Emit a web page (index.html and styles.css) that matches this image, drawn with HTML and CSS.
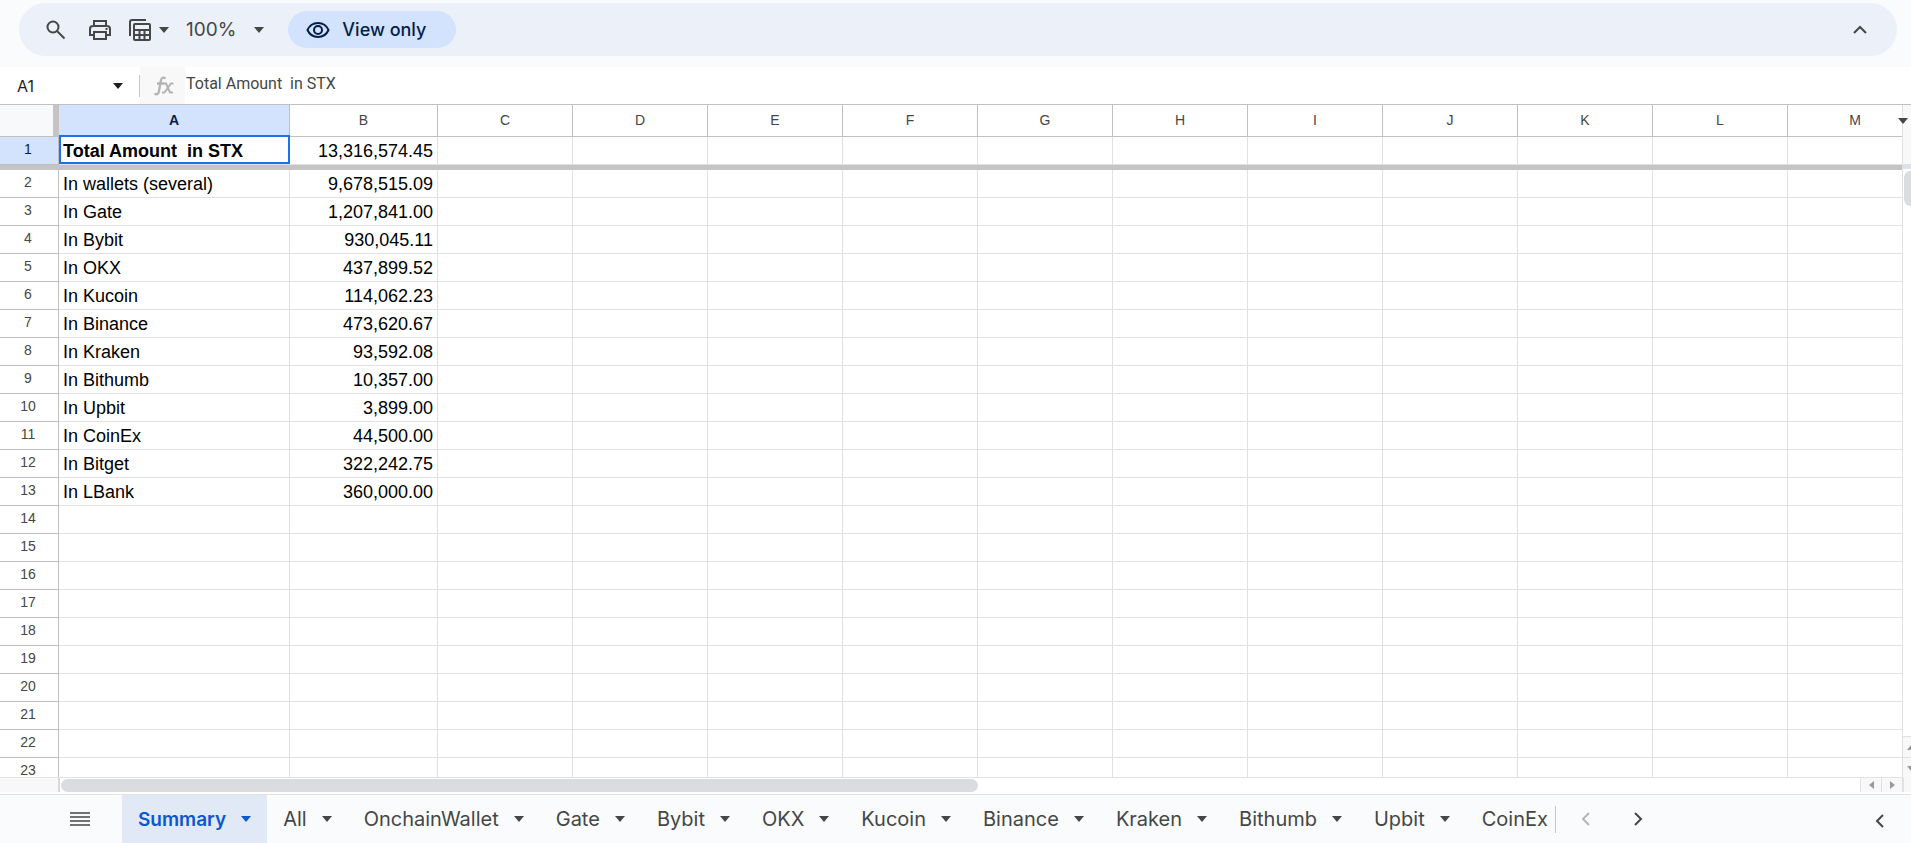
FILE: index.html
```html
<!DOCTYPE html>
<html lang="en">
<head>
    <meta charset="UTF-8">
    <meta name="viewport" content="width=device-width, initial-scale=1.0">
    <title>Total Amount in STX</title>
    <link rel="stylesheet" href="styles.css">
</head>
<body>
    <div class="toolbar">
        <button class="tool" aria-label="Search">
            <svg width="20" height="20" viewBox="0 0 20 20" fill="none" stroke="currentColor" stroke-width="2"><circle cx="7" cy="7" r="5.5"/><path d="M11 11l7.5 7.5"/></svg>
        </button>
        <button class="tool" aria-label="Print">
            <svg width="22" height="20" viewBox="0 0 22 20" fill="none" stroke="currentColor" stroke-width="2"><path d="M5 6V1h12v5M5 15H1V9a3 3 0 0 1 3-3h14a3 3 0 0 1 3 3v6h-4"/><path d="M5 12h12v7H5z"/><path d="M16.500 9h2"/></svg>
        </button>
        <button class="tool filter" aria-label="Filter views">
            <svg width="22" height="22" viewBox="0 0 22 22" fill="none" stroke="currentColor" stroke-width="2"><path d="M1 17V3a2 2 0 0 1 2-2h14"/><rect x="5" y="5" width="16" height="16" rx="1"/><path d="M5 11h16M5 16h16M10.500 11v10M15.500 11v10"/></svg>
            <span class="caret"></span>
        </button>
        <button class="tool zoom">100% <span class="caret"></span></button>
        <button class="view-only">
            <svg width="24" height="18" viewBox="0 0 24 18" fill="none" stroke="currentColor" stroke-width="2"><path d="M1.500 9C3.500 4.500 7.300 2 12 2s8.500 2.500 10.500 7c-2 4.500-5.800 7-10.500 7S3.500 13.500 1.500 9z"/><circle cx="12" cy="9" r="4"/></svg>
            View only
        </button>
        <button class="tool collapse" aria-label="Hide the menus">
            <svg width="14" height="9" viewBox="0 0 14 9" fill="none" stroke="currentColor" stroke-width="2"><path d="M1 8l6-6 6 6"/></svg>
        </button>
    </div>

    <div class="formula-bar">
        <button class="name-box">A1 <span class="caret"></span></button>
        <label class="fx" for="formula" aria-label="Formula">
            <svg width="20" height="20" viewBox="0 0 20 20" fill="none" stroke="currentColor" stroke-width="2"><path d="M11.500 2.500C9 .5 7.300 2 6.800 5L5 15c-.5 3-2.200 4.200-4.500 2.500M3 7.500h7" stroke-width="2.300"/><path d="M9.500 7.500H12l4 9h3M19.500 7.500H17l-6.500 9H8"/></svg>
        </label>
        <input class="formula" id="formula" type="text" value="Total Amount  in STX" readonly>
    </div>

    <div class="sheet">
        <div class="grid-view">
            <table class="grid">
                <colgroup id="cols"></colgroup>
                <thead id="head"></thead>
                <tbody id="rows"></tbody>
            </table>
        </div>
        <div class="v-scroll">
            <div class="v-head"><span class="caret"></span></div>
            <div class="v-track"><div class="v-thumb"></div></div>
            <button class="v-btn" aria-label="Scroll up"><span class="arrow up"></span></button>
            <button class="v-btn" aria-label="Scroll down"><span class="arrow down"></span></button>
        </div>
        <div class="h-scroll">
            <div class="h-corner"></div>
            <div class="h-track"><div class="h-thumb"></div></div>
            <button class="h-btn" aria-label="Scroll left"><span class="arrow left"></span></button>
            <button class="h-btn" aria-label="Scroll right"><span class="arrow right"></span></button>
        </div>
        <div class="scroll-corner"></div>
    </div>

    <div class="tab-bar">
        <button class="all-sheets" aria-label="All sheets">
            <svg width="20" height="14" viewBox="0 0 20 14" fill="none" stroke="currentColor" stroke-width="1.700"><path d="M0 1h20M0 5h20M0 9h20M0 13h20"/></svg>
        </button>
        <div class="tabs" id="tabs"></div>
        <div class="divider"></div>
        <button class="step disabled" aria-label="Previous tabs">
            <svg width="9" height="14" viewBox="0 0 9 14" fill="none" stroke="currentColor" stroke-width="2"><path d="M8 1L2 7l6 6"/></svg>
        </button>
        <button class="step" aria-label="Next tabs">
            <svg width="9" height="14" viewBox="0 0 9 14" fill="none" stroke="currentColor" stroke-width="2"><path d="M1 1l6 6-6 6"/></svg>
        </button>
        <button class="step side-panel" aria-label="Show side panel">
            <svg width="9" height="14" viewBox="0 0 9 14" fill="none" stroke="currentColor" stroke-width="2"><path d="M8 1L2 7l6 6"/></svg>
        </button>
    </div>

    <script src="script.js"></script>
</body>
</html>
```

FILE: styles.css
```css
* {
    box-sizing: border-box;
}
body {
    margin: 0;
    height: 100vh;
    display: flex;
    flex-direction: column;
    overflow: hidden;
    background: #f9fbfd;
    color: #444746;
    font-family: Inter, sans-serif;
}
button {
    margin: 0;
    padding: 0;
    border: none;
    background: none;
    color: inherit;
    font: inherit;
    cursor: pointer;
}
svg {
    display: block;
}
.caret {
    flex: none;
    border: 5px solid transparent;
    border-top: 6px solid currentColor;
    border-bottom: none;
}

/* toolbar */
.toolbar {
    display: flex;
    align-items: center;
    flex: none;
    height: 53px;
    margin: 3px 14px 11px 19px;
    padding: 0 30px 0 27px;
    border-radius: 27px;
    background: #ecf1f9;
}
.tool {
    display: flex;
    align-items: center;
    margin-right: 23px;
}
.filter {
    gap: 8px;
    margin-right: 17px;
}
.filter svg {
    margin-left: -5px;
}
.zoom {
    gap: 18px;
    margin-right: 24px;
    font-size: 19px;
}
.view-only {
    display: flex;
    align-items: center;
    gap: 12px;
    height: 37px;
    padding: 0 30px 0 18px;
    border-radius: 19px;
    background: #d3e3fd;
    color: #041e49;
    font-size: 18px;
    font-weight: 500;
}
.collapse {
    margin: 0 0 0 auto;
}

/* formula bar */
.formula-bar {
    display: flex;
    align-items: center;
    flex: none;
    height: 37px;
    background: #fff;
}
.name-box {
    display: flex;
    align-items: center;
    justify-content: space-between;
    width: 140px;
    height: 22px;
    padding: 0 16px 0 17px;
    border-right: 1px solid #c7c7c7;
    font-size: 16px;
    color: #1f1f1f;
}
.fx {
    display: flex;
    align-items: center;
    justify-content: center;
    width: 45px;
    height: 37px;
    padding-left: 2px;
    background: #f8f8f8;
    color: #b4b4b4;
}
.formula {
    flex: 1;
    height: 30px;
    padding: 0 1px 4px;
    border: none;
    outline: none;
    font-family: Roboto, sans-serif;
    font-size: 16px;
    color: #444746;
}

/* grid */
.sheet {
    display: grid;
    grid-template-columns: minmax(0, 1fr) 9px;
    grid-template-rows: minmax(0, 1fr) 16px;
    flex: 1;
    min-height: 0;
    border-top: 1px solid #c0c0c0;
    border-bottom: 1px solid #e1e3e1;
    background: #fff;
}
.grid-view {
    overflow: hidden;
    border-bottom: 1px solid #e1e3e1;
}
.grid {
    width: max-content;
    table-layout: fixed;
    border-collapse: separate;
    border-spacing: 0;
}
.col-number {
    width: 59px;
}
.col-a {
    width: 231px;
}
.col-b {
    width: 148px;
}
.col {
    width: 135px;
}
.grid th {
    padding: 0 0 2px;
    border-right: 1px solid #c0c0c0;
    border-bottom: 1px solid #c0c0c0;
    font-family: "Liberation Sans", Arial, sans-serif;
    font-size: 14px;
    font-weight: 400;
    color: #444746;
}
.grid thead th {
    height: 32px;
}
.grid .corner {
    border-right: 6px solid #c4c4c4;
    background: #f8f9fa;
}
.grid tbody th {
    height: 28px;
    padding: 0 2px 3px 0;
}
.grid .selected-head {
    background: #d3e3fd;
    color: #041e49;
}
.grid thead .selected-head {
    font-weight: 700;
}
.grid td {
    height: 28px;
    padding: 0 4px;
    border-right: 1px solid #e1e1e1;
    border-bottom: 1px solid #e1e1e1;
    font-family: "Liberation Sans", Arial, sans-serif;
    font-size: 18px;
    line-height: 20px;
    white-space: pre;
    color: #000;
}
.grid .amount {
    text-align: right;
}
.grid .selected {
    position: relative;
    font-weight: 700;
}
.selected::after {
    content: "";
    position: absolute;
    inset: -2px -1px 0 0;
    border: 2px solid #1a73e8;
}
.grid .freeze {
    height: 5px;
    padding: 0;
    border: none;
    background: #c4c4c4;
    line-height: 0;
}

/* scrollbars */
.arrow {
    display: block;
    border: 4px solid transparent;
}
.up {
    border-top: none;
    border-bottom: 5px solid #999;
}
.down {
    border-bottom: none;
    border-top: 5px solid #999;
}
.left {
    border-left: none;
    border-right: 5px solid #999;
}
.right {
    border-right: none;
    border-left: 5px solid #999;
}
.v-scroll {
    display: flex;
    flex-direction: column;
    border-left: 1px solid #e1e1e1;
}
.v-head {
    display: flex;
    align-items: center;
    flex: none;
    height: 64px;
    padding-bottom: 27px;
    border-bottom: 5px solid #dde1eb;
    background: #f8f8f8;
}
.v-head .caret {
    margin-left: -5px;
}
.v-track {
    flex: 1;
    padding: 2px 0 0 1px;
}
.v-thumb {
    width: 13px;
    height: 35px;
    border-radius: 7px;
    background: #dadce0;
}
.v-btn {
    display: flex;
    align-items: center;
    flex: none;
    height: 21px;
    padding-left: 4px;
    border-top: 1px solid #e1e1e1;
    background: #f8f8f8;
}
.h-scroll {
    display: flex;
    padding-bottom: 2px;
}
.h-corner {
    width: 60px;
    border-right: 2px solid #d9d9d9;
    background: #f8f8f8;
}
.h-track {
    flex: 1;
    padding: 1px;
}
.h-thumb {
    width: 51%;
    height: 13px;
    border-radius: 7px;
    background: #dadce0;
}
.h-btn {
    display: flex;
    align-items: center;
    justify-content: center;
    width: 21px;
    border-left: 1px solid #e1e1e1;
    background: #f8f8f8;
}
.scroll-corner {
    margin-bottom: 2px;
    border-left: 2px solid #e1e1e1;
    background: #f8f8f8;
}

/* sheet tabs */
.tab-bar {
    display: flex;
    align-items: center;
    flex: none;
    height: 48px;
}
.all-sheets {
    padding: 0 32px 0 70px;
}
.tabs {
    display: flex;
    overflow: hidden;
    width: 75%;
    height: 48px;
}
.tab {
    display: flex;
    align-items: center;
    flex: none;
    gap: 15px;
    padding: 0 16px;
    font-size: 20px;
}
.tab.active {
    background: #e1e9f7;
    color: #0b57d0;
    font-size: 19px;
    font-weight: 600;
}
.divider {
    width: 1px;
    height: 27px;
    margin-right: 3px;
    background: #c4c7c5;
}
.step {
    padding: 0 22px;
}
.disabled {
    color: #b4b6b8;
}
.side-panel {
    margin-left: auto;
    padding: 4px 27px 0 0;
}
```

FILE: script.js
```js
const columns = ["A", "B", "C", "D", "E", "F", "G", "H", "I", "J", "K", "L", "M"];

const data = [
    ["Total Amount  in STX", "13,316,574.45"],
    ["In wallets (several)", "9,678,515.09"],
    ["In Gate", "1,207,841.00"],
    ["In Bybit", "930,045.11"],
    ["In OKX", "437,899.52"],
    ["In Kucoin", "114,062.23"],
    ["In Binance", "473,620.67"],
    ["In Kraken", "93,592.08"],
    ["In Bithumb", "10,357.00"],
    ["In Upbit", "3,899.00"],
    ["In CoinEx", "44,500.00"],
    ["In Bitget", "322,242.75"],
    ["In LBank", "360,000.00"]
];

const sheets = ["Summary", "All", "OnchainWallet", "Gate", "Bybit", "OKX", "Kucoin", "Binance", "Kraken", "Bithumb", "Upbit", "CoinEx"];

const rowCount = 23;

function showHead() {
    let cols = `<col class="col-number">`;
    let head = `<th class="corner"></th>`;
    columns.forEach((name, index) => {
        const size = index === 0 ? "col-a" : index === 1 ? "col-b" : "col";
        cols += `<col class="${size}">`;
        head += `<th scope="col" class="${index === 0 ? "selected-head" : ""}">${name}</th>`;
    });
    document.getElementById("cols").innerHTML = cols;
    document.getElementById("head").innerHTML = `<tr>${head}</tr>`;
}

function showRows() {
    let html = "";
    for (let i = 0; i < rowCount; i++) {
        const row = data[i] || ["", ""];
        html += `<tr><th scope="row" class="${i === 0 ? "selected-head" : ""}">${i + 1}</th>`;
        html += `<td class="${i === 0 ? "selected" : ""}">${row[0]}</td>`;
        html += `<td class="amount">${row[1]}</td>`;
        html += "<td></td>".repeat(columns.length - 2) + "</tr>";
        // row 1 is frozen
        if (i === 0) {
            html += `<tr><td class="freeze" colspan="${columns.length + 1}"></td></tr>`;
        }
    }
    document.getElementById("rows").innerHTML = html;
}

function showTabs() {
    document.getElementById("tabs").innerHTML = sheets.map((name, index) =>
        `<button class="tab ${index === 0 ? "active" : ""}">${name}<span class="caret"></span></button>`
    ).join("");
}

showHead();
showRows();
showTabs();
```
